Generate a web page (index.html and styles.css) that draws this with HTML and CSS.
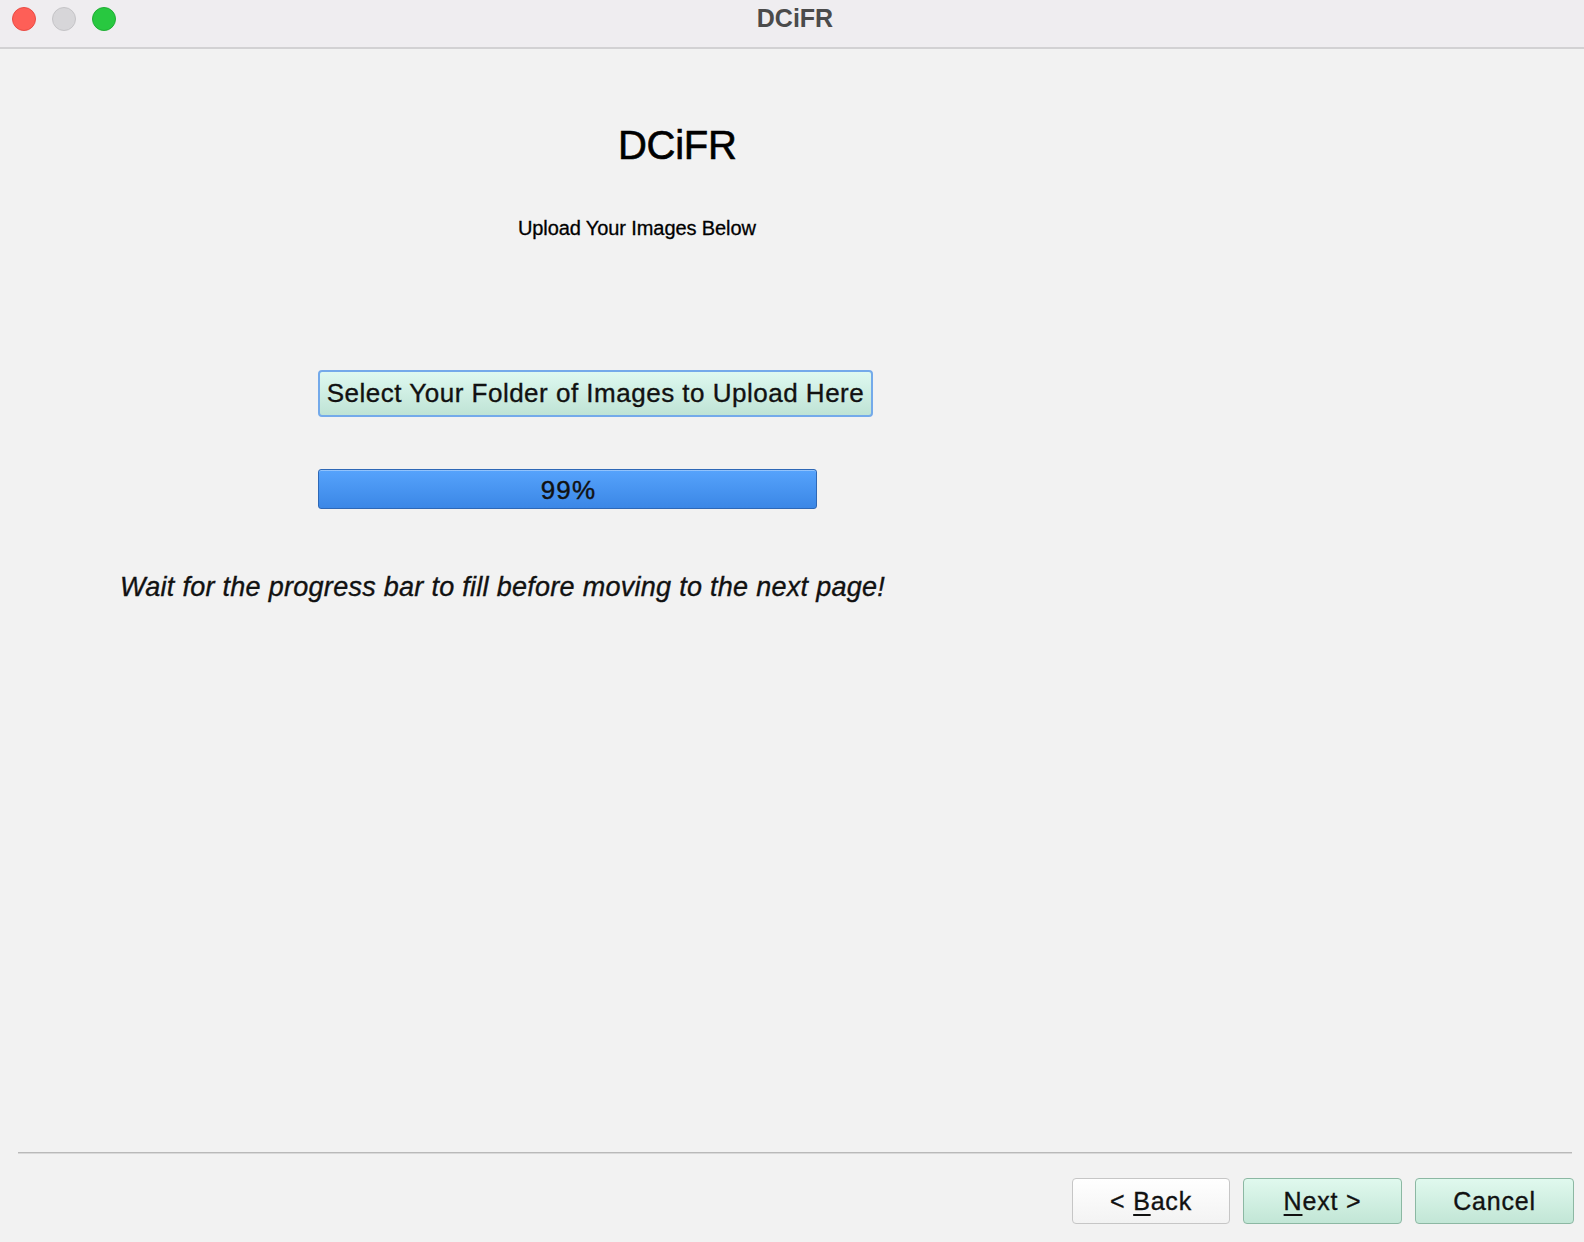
FILE: index.html
```html
<!DOCTYPE html>
<html lang="en">
<head>
<meta charset="utf-8">
<title>DCiFR</title>
<link rel="stylesheet" href="styles.css">
</head>
<body>
<div class="window">
  <header class="titlebar">
    <div class="lights">
      <span class="light light-close"></span>
      <span class="light light-min"></span>
      <span class="light light-max"></span>
    </div>
    <div class="window-title">DCiFR</div>
  </header>
  <main class="content">
    <h1 class="app-title">DCiFR</h1>
    <p class="subtitle">Upload Your Images Below</p>
    <button class="select-btn" type="button">Select Your Folder of Images to Upload Here</button>
    <div class="progress"><span class="progress-label">99%</span></div>
    <p class="note">Wait for the progress bar to fill before moving to the next page!</p>
  </main>
  <footer class="footer">
    <div class="separator"></div>
    <div class="actions">
      <button class="wiz-btn wiz-back" type="button">&lt; <u>B</u>ack</button>
      <button class="wiz-btn wiz-green" type="button"><u>N</u>ext &gt;</button>
      <button class="wiz-btn wiz-green" type="button">Cancel</button>
    </div>
  </footer>
</div>
</body>
</html>
```
FILE: styles.css
```css
* { box-sizing: border-box; }
html, body { margin: 0; padding: 0; }
body {
  background: #f2f2f2;
  font-family: "Liberation Sans", Arial, sans-serif;
  color: #000;
}
.window {
  width: 1584px;
  height: 1242px;
  display: flex;
  flex-direction: column;
  background: #f2f2f2;
}
.titlebar {
  position: relative;
  height: 49px;
  flex: none;
  background: #efedf0;
  border-bottom: 2px solid #d2d1d3;
}
.lights {
  position: absolute;
  left: 12px;
  top: 7px;
  display: flex;
  gap: 16px;
}
.light {
  width: 24px;
  height: 24px;
  border-radius: 50%;
  display: block;
}
.light-close { background: #fe5f57; border: 1px solid #e94b44; }
.light-min { background: #d7d6d9; border: 1px solid #c5c4c7; }
.light-max { background: #28c840; border: 1px solid #1fae34; }
.window-title {
  text-align: center;
  padding-left: 6px;
  padding-top: 6px;
  font-size: 25px;
  line-height: 25px;
  font-weight: bold;
  color: #4b4b4b;
}
.content {
  flex: 1;
  display: flex;
  flex-direction: column;
  align-items: flex-start;
}
.app-title {
  margin: 76px 0 0 618px;
  font-size: 40px;
  line-height: 40px;
  font-weight: normal;
  letter-spacing: -0.3px;
  -webkit-text-stroke: 0.6px #000;
}
.subtitle {
  margin: 53px 0 0 518px;
  font-size: 20px;
  line-height: 20px;
  letter-spacing: -0.1px;
  -webkit-text-stroke: 0.3px #000;
}
.select-btn {
  margin: 132px 0 0 318px;
  width: 555px;
  height: 47px;
  padding: 0;
  font-family: "Liberation Sans", Arial, sans-serif;
  font-size: 26px;
  letter-spacing: 0.5px;
  color: #111;
  -webkit-text-stroke: 0.35px #111;
  white-space: nowrap;
  text-align: center;
  background: linear-gradient(#def9f0, #bfe3d5);
  border: 2px solid #74aaea;
  border-radius: 4px;
}
.progress {
  margin: 52px 0 0 318px;
  width: 499px;
  height: 40px;
  display: flex;
  align-items: center;
  justify-content: center;
  background: linear-gradient(#56a3fc, #3b87e6);
  border: 1.5px solid #2e68b6;
  border-radius: 3px;
  box-shadow: inset 0 1px 0 rgba(255,255,255,0.35);
}
.progress-label {
  font-size: 26px;
  letter-spacing: 1.2px;
  color: #111;
  -webkit-text-stroke: 0.4px #111;
  padding-left: 2px;
  padding-top: 2px;
}
.note {
  margin: 65px 0 0 120px;
  font-size: 27px;
  line-height: 27px;
  font-style: italic;
  letter-spacing: 0.28px;
  color: #111;
  -webkit-text-stroke: 0.35px #111;
}
.footer {
  flex: none;
  padding: 0 10px 18px 18px;
}
.separator {
  height: 2px;
  background: #b9b9b9;
  border-bottom: 1px solid #d9d9d9;
  margin-right: 2px;
  margin-bottom: 24px;
}
.actions {
  display: flex;
  justify-content: flex-end;
  gap: 13px;
}
.wiz-btn {
  width: 159px;
  height: 46px;
  padding: 0;
  font-family: "Liberation Sans", Arial, sans-serif;
  font-size: 25px;
  letter-spacing: 0.8px;
  color: #111;
  -webkit-text-stroke: 0.35px #111;
  border-radius: 4px;
}
.wiz-btn u { text-underline-offset: 4px; text-decoration-thickness: 1.5px; }
.wiz-back {
  width: 158px;
  background: linear-gradient(#ffffff, #f3f3f3);
  border: 1.5px solid #c6c6c6;
}
.wiz-green {
  background: linear-gradient(#e0f9ee, #c2e6d6);
  border: 1.5px solid #8cb8a3;
}
```
